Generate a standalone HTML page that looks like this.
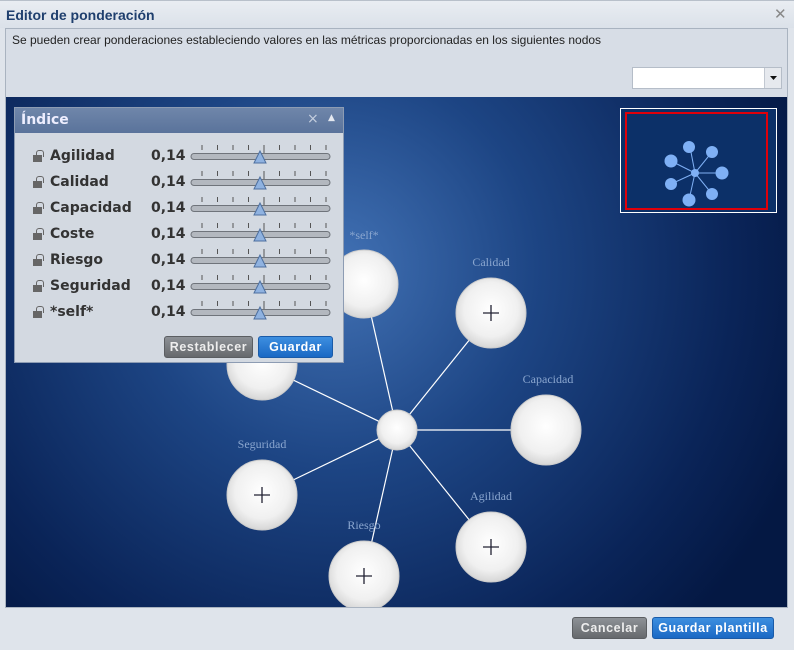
<!DOCTYPE html>
<html><head><meta charset="utf-8"><style>
*{margin:0;padding:0;box-sizing:border-box}
body{width:794px;height:650px;background:#dfe4eb;font-family:"Liberation Sans",sans-serif;position:relative;overflow:hidden}
.abs{position:absolute}
.title{left:0;top:0;width:794px;height:28px;background:linear-gradient(#e9edf2,#dbe1e9);border-top:1px solid #b8c0ca}
.title span{position:absolute;left:6px;top:6px;font-weight:bold;font-size:14px;color:#1f3f6e}
.content{left:5px;top:28px;width:783px;height:580px;background:#d7dde6;border:1px solid #a9b3c0}
.desc{left:12px;top:33px;font-size:12px;color:#222}
.combo{left:632px;top:67px;width:150px;height:22px;background:#fff;border:1px solid #b5bdc8}
.combo .arr{position:absolute;right:0;top:0;width:17px;height:20px;background:#e6e9ee;border-left:1px solid #c2c8d1}
.panel{left:14px;top:107px;width:330px;height:256px;background:#d3d9e1;border:1px solid #8d9cb3}
.ph{left:0;top:0;width:328px;height:25px;background:linear-gradient(#6f86aa,#5a739b);color:#eef;font-size:14px;font-weight:bold;font-family:"DejaVu Sans",sans-serif}
.row{left:0;height:26px;width:330px;font-size:14px;font-weight:bold;color:#333;font-family:"DejaVu Sans",sans-serif}
.lock{position:absolute;left:18px;top:10px;width:9px;height:7px;background:#666}
.lock:before{content:"";position:absolute;left:3px;top:-5px;width:6px;height:6px;border:1.5px solid #666;border-bottom:none;border-radius:3px 3px 0 0}
.btn{font-size:12.5px;font-weight:bold;color:#fff;text-align:center;border-radius:3px;line-height:21px;height:22px;letter-spacing:0.6px}
.g{background:linear-gradient(#8d9196,#66696d);border:1px solid #5b5e62;color:#eee}
.b{background:linear-gradient(#3d8fe0,#1a68c4);border:1px solid #1a5ba8}
</style></head><body>
<div class="abs title"><span>Editor de ponderación</span><span style="left:774px;top:4px;color:#888;font-weight:normal;font-size:15px">✕</span></div>
<div class="abs content"></div>
<div class="abs desc">Se pueden crear ponderaciones estableciendo valores en las métricas proporcionadas en los siguientes nodos</div>
<div class="abs combo"><div class="arr"><svg width="17" height="20"><path d="M5 8h7l-3.5 4z" fill="#111"/></svg></div></div>
<svg class="abs" style="left:6px;top:97px" width="781" height="510">
<defs><radialGradient id="bg" cx="330" cy="170" r="500" gradientUnits="userSpaceOnUse"><stop offset="0" stop-color="#4272b5"/><stop offset="0.4" stop-color="#1d4584"/><stop offset="0.8" stop-color="#0a2458"/><stop offset="1" stop-color="#041843"/></radialGradient>
<radialGradient id="nd" cx="0.5" cy="0.45" r="0.55"><stop offset="0" stop-color="#fff"/><stop offset="0.7" stop-color="#f0f0f0"/><stop offset="1" stop-color="#d6d6d6"/></radialGradient></defs>
<rect width="781" height="510" fill="url(#bg)"/>
<g stroke="#fff" stroke-width="1.2">
<line x1="391" y1="333" x2="358" y2="187"/><line x1="391" y1="333" x2="485" y2="216"/><line x1="391" y1="333" x2="540" y2="333"/><line x1="391" y1="333" x2="485" y2="450"/><line x1="391" y1="333" x2="358" y2="479"/><line x1="391" y1="333" x2="256" y2="398"/><line x1="391" y1="333" x2="256" y2="268"/></g>
<g fill="url(#nd)" stroke="#ccc">
<circle cx="358" cy="187" r="34"/><circle cx="485" cy="216" r="35"/><circle cx="540" cy="333" r="35"/><circle cx="485" cy="450" r="35"/><circle cx="358" cy="479" r="35"/><circle cx="256" cy="398" r="35"/><circle cx="256" cy="268" r="35"/><circle cx="391" cy="333" r="20"/></g>
<g stroke="#223" stroke-width="1.3"><path d="M477 216h16M485 208v16M477 450h16M485 442v16M350 479h16M358 471v16M248 398h16M256 390v16"/></g>
<g fill="#8aa6cf" font-family="Liberation Serif,serif" font-size="12" text-anchor="middle">
<text x="358" y="142">*self*</text><text x="485" y="169">Calidad</text><text x="542" y="286">Capacidad</text><text x="485" y="403">Agilidad</text><text x="358" y="432">Riesgo</text><text x="256" y="351">Seguridad</text></g>
<rect x="614.5" y="11.5" width="156" height="104" fill="#0c3068" stroke="#fff"/>
<rect x="620" y="16" width="141" height="96" fill="none" stroke="#e0000a" stroke-width="2"/>
<g stroke="#7fb0f5" stroke-width="1"><path d="M689 76L684 50M689 76L706 55M689 76L716 76M689 76L706 97M689 76L683 103M689 76L665 87M689 76L665 64"/></g>
<g fill="#7fb0f5"><circle cx="689" cy="76" r="4"/><circle cx="683" cy="50" r="6"/><circle cx="706" cy="55" r="6"/><circle cx="716" cy="76" r="6.5"/><circle cx="706" cy="97" r="6"/><circle cx="683" cy="103" r="6.5"/><circle cx="665" cy="87" r="6"/><circle cx="665" cy="64" r="6.5"/></g>
</svg>
<div class="abs panel">
<div class="abs ph"><span style="position:absolute;left:6px;top:4px">Índice</span><span style="position:absolute;left:292px;top:3px;font-weight:normal;color:#c5cfdf">×</span><span style="position:absolute;left:313px;top:5px;font-size:9px;color:#e5e9f0">▲</span></div>
<div id="rows"></div>
<div class="abs btn g" style="left:149px;top:228px;width:89px">Restablecer</div>
<div class="abs btn b" style="left:243px;top:228px;width:75px">Guardar</div>
</div>
<script>
var n=["Agilidad","Calidad","Capacidad","Coste","Riesgo","Seguridad","*self*"],h="";
n.forEach(function(t,i){var y=37+i*26;
var ticks="";for(var k=0;k<9;k++){var x=12+k*15.5;ticks+='<path d="M'+x+' 0v'+(k==4?8:5)+'" stroke="#555"/>';}
h+='<div class="abs row" style="top:'+y+'px"><div class="lock"></div><span style="position:absolute;left:35px;top:3px">'+t+'</span><span style="position:absolute;left:136px;top:3px">0,14</span>'+
'<svg style="position:absolute;left:175px;top:0" width="142" height="24">'+ticks+'<rect x="1" y="8.5" width="139" height="6" rx="3" fill="#b3b8bf" stroke="#6f747b"/><path d="M70 6l-6 12h12z" fill="#8fb2e0" stroke="#4d6f9f"/></svg></div>';});
document.getElementById("rows").innerHTML=h;
</script>
<div class="abs btn g" style="left:572px;top:617px;width:75px">Cancelar</div>
<div class="abs btn b" style="left:652px;top:617px;width:122px">Guardar plantilla</div>
</body></html>
